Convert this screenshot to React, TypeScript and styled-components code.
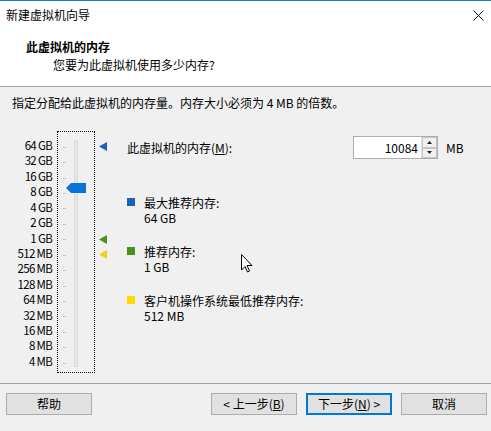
import React from 'react'
import styled, { createGlobalStyle } from 'styled-components'

const GlobalStyle = createGlobalStyle`
  html, body {
    margin: 0;
    padding: 0;
    background: #f0f0f0;
  }
  body {
    font-family: "Noto Sans CJK SC", "Microsoft YaHei", sans-serif;
    font-size: 12px;
    color: #000;
  }
`

const Window = styled.div`
  position: relative;
  width: 491px;
  height: 431px;
  display: flex;
  flex-direction: column;
  background: #f0f0f0;
  overflow: hidden;
`

const TitleBar = styled.div`
  height: 28px;
  border-top: 1px solid #1979ca;
  background: #fff;
  display: flex;
  align-items: center;
  justify-content: space-between;
  padding: 0 6px;
  line-height: 1;
`

const Close = styled.svg`
  width: 11px;
  height: 11px;
  margin-right: 1px;
`

const Header = styled.div`
  height: 58px;
  background: #fff;
  border-bottom: 1px solid #a0a0a0;
  padding: 10px 0 0 26px;
  box-sizing: border-box;
`

const HeaderTitle = styled.div`
  font-weight: bold;
  line-height: 16px;
`

const HeaderSub = styled.div`
  margin-left: 27px;
  margin-top: 2px;
  line-height: 16px;
`

const Body = styled.div`
  flex: 1;
  padding: 8px 0 0 12px;
`

const Hint = styled.div`
  line-height: 16px;
`

const Main = styled.div`
  display: flex;
  margin-top: 20px;
`

const Scale = styled.div`
  width: 40px;
  padding-top: 7px;
  display: flex;
  flex-direction: column;
  align-items: flex-end;
`

const ScaleLabel = styled.div`
  height: 15.43px;
  line-height: 15.43px;
  font-size: 11.5px;
  letter-spacing: -0.7px;
  white-space: nowrap;
`

const SliderBox = styled.div`
  position: relative;
  width: 36px;
  height: 240px;
  margin-left: 5px;
  border: 1px dotted #000;
`

const Track = styled.div`
  position: absolute;
  left: 16px;
  top: 8px;
  width: 4px;
  height: 227px;
  background: #e7e7e7;
  border: 1px solid #d9d9d9;
  box-sizing: border-box;
`

const Tick = styled.div`
  position: absolute;
  left: 5px;
  width: 3px;
  height: 1px;
  background: #c8c8c8;
`

const Thumb = styled.svg`
  position: absolute;
  left: 8px;
  width: 20px;
  height: 10px;
`

const Markers = styled.div`
  position: relative;
  width: 9px;
  margin-left: 4px;
`

const Marker = styled.svg`
  position: absolute;
  left: 0;
  width: 8px;
  height: 9px;
`

const Panel = styled.div`
  margin-left: 19px;
  padding-top: 5px;
  display: flex;
  flex-direction: column;
`

const MemoryRow = styled.div`
  display: flex;
  align-items: center;
  height: 23px;
`

const MemoryLabel = styled.div`
  width: 226px;
`

const Spin = styled.div`
  display: flex;
  width: 85px;
  height: 23px;
  box-sizing: border-box;
  border: 1px solid #adadad;
  background: #fff;
`

const SpinValue = styled.div`
  flex: 1;
  text-align: right;
  padding-right: 3px;
  line-height: 21px;
`

const SpinButtons = styled.div`
  width: 15px;
  display: flex;
  flex-direction: column;
  border-left: 1px solid #e0e0e0;
`

const SpinButton = styled.div`
  flex: 1;
  display: flex;
  align-items: center;
  justify-content: center;
  background: #f0f0f0;
  border: 1px solid #c4c4c4;
`

const Unit = styled.div`
  margin-left: 8px;
`

const Legend = styled.div`
  display: flex;
  flex-direction: column;
  gap: 19px;
  margin-top: 36px;
`

const LegendItem = styled.div`
  display: flex;
  align-items: flex-start;
`

const Swatch = styled.div<{ $color: string }>`
  width: 8px;
  height: 8px;
  margin-top: 3px;
  margin-right: 9px;
  background: ${p => p.$color};
`

const LegendText = styled.div`
  display: flex;
  flex-direction: column;
`

const LegendLine = styled.div`
  height: 15px;
  line-height: 15px;
`

const Cursor = styled.svg`
  position: absolute;
  left: 241px;
  top: 254px;
  width: 12px;
  height: 19px;
`

const Footer = styled.div`
  height: 38px;
  border-top: 1px solid #a0a0a0;
  display: flex;
  align-items: flex-start;
  padding: 9px 4px 0 6px;
`

const Button = styled.div<{ $default?: boolean }>`
  width: 86px;
  height: 22px;
  box-sizing: border-box;
  background: #e1e1e1;
  border: ${p => (p.$default ? '2px solid #0078d7' : '1px solid #adadad')};
  display: flex;
  align-items: center;
  justify-content: center;
  line-height: 1;
`

const Spacer = styled.div`
  flex: 1;
`

const Gap = styled.div`
  width: 9px;
`

const Key = styled.span`
  text-decoration: underline;
`

const labels = [
  '64 GB', '32 GB', '16 GB', '8 GB', '4 GB', '2 GB', '1 GB',
  '512 MB', '256 MB', '128 MB', '64 MB', '32 MB', '16 MB', '8 MB', '4 MB',
]
const step = 15.43

const legend = [
  { color: '#1565b4', title: '最大推荐内存:', value: '64 GB' },
  { color: '#4b8f1c', title: '推荐内存:', value: '1 GB' },
  { color: '#ffd800', title: '客户机操作系统最低推荐内存:', value: '512 MB' },
]

function LeftArrow({ color, top }: { color: string; top: number }) {
  return (
    <Marker viewBox="0 0 8 9" style={{ top }}>
      <polygon points="0,4.5 8,0 8,9" fill={color} />
    </Marker>
  )
}

export default function App() {
  // 10084 MB sits about 0.3 of a step above the 8 GB row
  const thumbTop = 7 + step * 3 + step / 2 - step * 0.3 - 5

  return (
    <Window>
      <GlobalStyle />
      <TitleBar>
        <span>新建虚拟机向导</span>
        <Close viewBox="0 0 11 11">
          <path d="M0.5 0.5 L10.5 10.5 M10.5 0.5 L0.5 10.5" stroke="#111" strokeWidth="1" />
        </Close>
      </TitleBar>
      <Header>
        <HeaderTitle>此虚拟机的内存</HeaderTitle>
        <HeaderSub>您要为此虚拟机使用多少内存?</HeaderSub>
      </Header>
      <Body>
        <Hint>指定分配给此虚拟机的内存量。内存大小必须为 4 MB 的倍数。</Hint>
        <Main>
          <Scale>
            {labels.map(l => (
              <ScaleLabel key={l}>{l}</ScaleLabel>
            ))}
          </Scale>
          <SliderBox>
            <Track />
            {labels.map((l, i) => (
              <Tick key={l} style={{ top: 7 + step * i + step / 2 }} />
            ))}
            <Thumb viewBox="0 0 20 10" style={{ top: thumbTop }}>
              <polygon points="0,5 5,0 20,0 20,10 5,10" fill="#0a74d6" />
            </Thumb>
          </SliderBox>
          <Markers>
            <LeftArrow color="#1565b4" top={11} />
            <LeftArrow color="#4b8f1c" top={104} />
            <LeftArrow color="#f0d010" top={119} />
          </Markers>
          <Panel>
            <MemoryRow>
              <MemoryLabel>
                此虚拟机的内存(<Key>M</Key>):
              </MemoryLabel>
              <Spin>
                <SpinValue>10084</SpinValue>
                <SpinButtons>
                  <SpinButton>
                    <svg width="5" height="3" viewBox="0 0 5 3">
                      <polygon points="2.5,0 5,3 0,3" fill="#222" />
                    </svg>
                  </SpinButton>
                  <SpinButton>
                    <svg width="5" height="3" viewBox="0 0 5 3">
                      <polygon points="0,0 5,0 2.5,3" fill="#222" />
                    </svg>
                  </SpinButton>
                </SpinButtons>
              </Spin>
              <Unit>MB</Unit>
            </MemoryRow>
            <Legend>
              {legend.map(item => (
                <LegendItem key={item.title}>
                  <Swatch $color={item.color} />
                  <LegendText>
                    <LegendLine>{item.title}</LegendLine>
                    <LegendLine>{item.value}</LegendLine>
                  </LegendText>
                </LegendItem>
              ))}
            </Legend>
          </Panel>
        </Main>
      </Body>
      <Footer>
        <Button>帮助</Button>
        <Spacer />
        <Button>
          &lt; 上一步(<Key>B</Key>)
        </Button>
        <Gap />
        <Button $default>
          下一步(<Key>N</Key>) &gt;
        </Button>
        <Gap />
        <Button>取消</Button>
      </Footer>
      <Cursor viewBox="0 0 12 19">
        <path d="M0.5 0.5 L0.5 16 L4 12.5 L6.5 18 L8.5 17 L6 11.5 L11 11.5 Z" fill="#fff" stroke="#000" strokeWidth="1" />
      </Cursor>
    </Window>
  )
}
